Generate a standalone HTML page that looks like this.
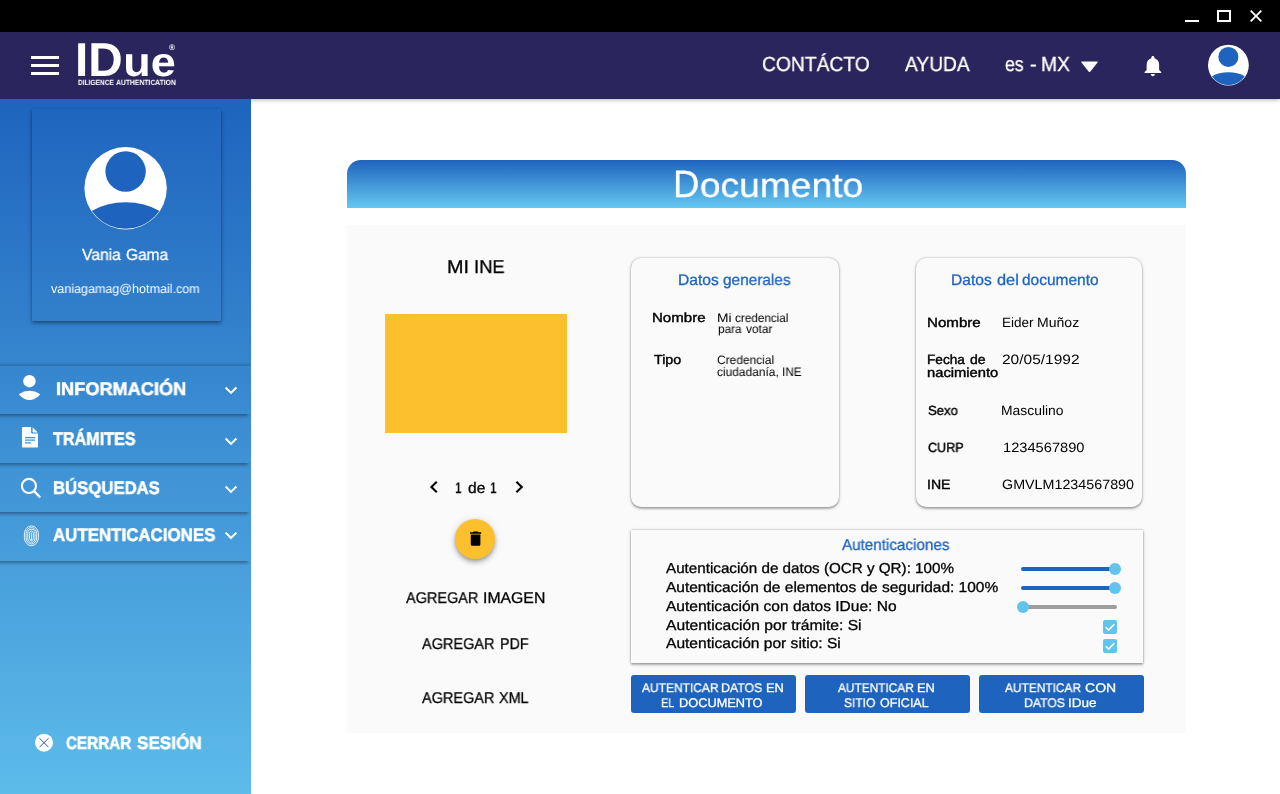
<!DOCTYPE html>
<html lang="es-MX"><head><meta charset="utf-8"><title>IDue - Documento</title>
<style>
*{box-sizing:border-box;margin:0;padding:0}
html,body{width:1280px;height:794px;overflow:hidden;background:#fff}
body{position:relative;font-family:"Liberation Sans",sans-serif;-webkit-font-smoothing:antialiased}
.abs,.t,svg{position:absolute}
h1,nav,aside,main,section{font:inherit}
.t{will-change:transform;text-rendering:geometricPrecision;transform-origin:0 50%;display:block;font-weight:400;white-space:nowrap}
.md{-webkit-text-stroke:.3px currentColor}
.sb{-webkit-text-stroke:.42px currentColor}
.xb{-webkit-text-stroke:.55px currentColor}
#titlebar{left:0;top:0;width:1280px;height:32px;background:#000}
#topbar{left:0;top:32px;width:1280px;height:67px;background:#2a255c;box-shadow:0 1px 4px rgba(0,0,0,.3)}
#sidebar{left:0;top:99px;width:251px;height:695px;overflow:hidden;background:linear-gradient(180deg,#1e64be 0%,#5dbcea 100%)}
#profile{left:32px;top:109px;width:189px;height:212px;box-shadow:0 2px 4px rgba(0,0,0,.42),0 0 2px rgba(0,0,0,.12)}
.item{left:0;width:250px;height:48px}
.sh{left:0;width:250px;height:5px;background:linear-gradient(180deg,rgba(0,0,0,.30) 0,rgba(0,0,0,.27) 20%,rgba(0,0,0,.17) 40%,rgba(0,0,0,.08) 65%,rgba(0,0,0,0) 100%);-webkit-mask-image:linear-gradient(90deg,#000 0,#000 246px,transparent 250px);mask-image:linear-gradient(90deg,#000 0,#000 246px,transparent 250px)}
.sht{left:0;top:361px;width:250px;height:5px;background:linear-gradient(0deg,rgba(0,0,0,.17) 0,rgba(0,0,0,.13) 20%,rgba(0,0,0,.08) 45%,rgba(0,0,0,.03) 70%,rgba(0,0,0,0) 100%)}
#dochead{left:347px;top:160px;width:839px;height:48px;border-radius:14px 14px 0 0;background:linear-gradient(180deg,#1e63bd 0%,#65c8f1 100%)}
#panel{left:347px;top:225px;width:839px;height:508px;background:#fafafa}
#photo{left:385px;top:314px;width:182px;height:119px;background:#fcbf2d}
#fab{left:455px;top:519px;width:40px;height:40px;border-radius:50%;background:#fcbf2d;box-shadow:0 2px 4px -1px rgba(0,0,0,.28),0 4px 5px 0 rgba(0,0,0,.16),0 1px 10px 0 rgba(0,0,0,.12)}
.card{background:#fafafa;border-radius:10px;box-shadow:0 2px 2px rgba(0,0,0,.24),0 0 2px rgba(0,0,0,.3),0 1px 5px rgba(0,0,0,.1)}
#card1{left:631px;top:258px;width:208px;height:249px}
#card2{left:916px;top:258px;width:226px;height:249px}
#auth{left:631px;top:530px;width:512px;height:133px;background:#fafafa;box-shadow:0 2px 2px rgba(0,0,0,.24),0 0 2px rgba(0,0,0,.3),0 1px 5px rgba(0,0,0,.1)}
.btn{top:675px;width:165px;height:38px;border-radius:3px;background:#1e63bd}
.track{height:4px;border-radius:2px}
.thumb{width:12px;height:12px;border-radius:50%;background:#62c4ee}
.chk{width:14px;height:14px;border-radius:2px;background:#62c4ee}
</style></head>
<body>
<div id="titlebar" class="abs">
<svg width="1280" height="32" viewBox="0 0 1280 32" style="left:0;top:0">
<rect x="1185" y="20" width="14" height="2" fill="#fff"/>
<rect x="1218" y="11" width="12" height="10" fill="none" stroke="#fff" stroke-width="2"/>
<path d="M1250.700 10.700L1261.300 21.300M1261.300 10.700L1250.700 21.300" stroke="#fff" stroke-width="1.900" fill="none"/>
</svg>
</div>
<header id="topbar" class="abs"></header>
<svg width="1280" height="67" viewBox="0 32 1280 67" style="left:0;top:32px">
<rect x="31" y="56" width="28" height="3" fill="#fff"/><rect x="31" y="64" width="28" height="3" fill="#fff"/><rect x="31" y="72" width="28" height="3" fill="#fff"/>
<path d="M1081.800 61.500h15.400q1 0 .4.900l-7.400 9.300q-.7.800-1.400 0l-7.400-9.300q-.6-.9.400-.9z" fill="#fff"/>
<g transform="translate(1140.400 53.300) scale(1.040)"><path fill="#fff" d="M12 22c1.100 0 2-.900 2-2h-4c0 1.100.890 2 2 2zm6-6v-5c0-3.070-1.640-5.640-4.500-6.320V4c0-.830-.670-1.500-1.500-1.500s-1.500.670-1.500 1.500v.680C7.630 5.360 6 7.920 6 11v5l-2 2v1h16v-1l-2-2z"/></g>
<circle cx="1228.4" cy="65.2" r="20.4" fill="#fff"/><circle cx="1228.4" cy="56.94" r="10.00" fill="#1e63bd"/><clipPath id="cl1228"><circle cx="1228.4" cy="65.2" r="19.80"/></clipPath><ellipse cx="1228.4" cy="86.62" rx="23.46" ry="14.48" fill="#1e63bd" clip-path="url(#cl1228)"/>
</svg>
<div><span class="t" style="left:75.02px;top:32.03px;font-size:47.5px;line-height:57px;transform:scaleX(1.0050);color:#fff;font-weight:700">ID<span style="display:inline-block;font-size:41px;line-height:49px;margin-left:0.93px;transform:scaleX(1.0902);transform-origin:0 50%">ue</span></span>
<span class="t" style="left:169.07px;top:43.16px;font-size:8.2px;line-height:10px;transform:scaleX(0.9841);color:#fff;font-weight:700">®</span></div><span class="t" style="left:77.59px;top:77.87px;font-size:7.6px;line-height:9px;transform:scaleX(0.8672);color:#fff;font-weight:700">DILIGENCE</span> <span class="t" style="left:115.59px;top:77.87px;font-size:7.6px;line-height:9px;transform:scaleX(0.8935);color:#fff;font-weight:700">AUTHENTICATION</span>
<nav><span class="t md" style="left:761.80px;top:52.93px;font-size:20.38px;line-height:24px;transform:scaleX(0.9461);color:#fff">CONTÁCTO</span>
<span class="t md" style="left:905.20px;top:52.93px;font-size:20.38px;line-height:24px;transform:scaleX(0.9433);color:#fff">AYUDA</span>
<span class="t md" style="left:1005.15px;top:52.93px;font-size:20.38px;line-height:24px;transform:scaleX(0.8691);color:#fff">es</span> <span class="t md" style="left:1030.18px;top:52.93px;font-size:20.38px;line-height:24px;transform:scaleX(0.9790);color:#fff">-</span> <span class="t md" style="left:1041.49px;top:52.93px;font-size:20.38px;line-height:24px;transform:scaleX(0.9458);color:#fff">MX</span></nav>
<aside>
<div id="sidebar" class="abs"></div>
<div id="profile" class="abs"></div>
<div class="sht abs"></div>
<div class="item abs" style="top:366px"></div><div class="sh abs" style="top:414px"></div>
<div class="item abs" style="top:415px"></div><div class="sh abs" style="top:463px"></div>
<div class="item abs" style="top:464px"></div><div class="sh abs" style="top:512px"></div>
<div class="item abs" style="top:513px"></div><div class="sh abs" style="top:561px"></div>
<svg width="251" height="695" viewBox="0 99 251 695" style="left:0;top:99px">
<circle cx="125.6" cy="188.2" r="41.2" fill="#fff"/><circle cx="125.6" cy="171.51" r="20.19" fill="#1e63bd"/><clipPath id="cl125"><circle cx="125.6" cy="188.2" r="40.60"/></clipPath><ellipse cx="125.6" cy="231.46" rx="47.38" ry="29.25" fill="#1e63bd" clip-path="url(#cl125)"/>
<g fill="#fff">
<circle cx="29.400" cy="381.200" r="6.200"/>
<path d="M18.700 394.200Q29.400 387.400 40.400 394.200Q29.400 406 18.700 394.200z"/>
<path d="M23 427h8.100v5.200q0 1.400 1.400 1.400h5.500v12.800q0 1-1 1h-14q-1 0-1-1v-18.400q0-1 1-1zM32.600 427.300l5.100 5.100h-4.400q-.7 0-.7-.7z"/>
</g>
<g stroke="#3f93d8" stroke-width="1.200" fill="none"><path d="M25 437.600h10.200M25 440.200h10.200M25 442.800h6.200"/></g>
<g stroke="#fff" fill="none" stroke-linecap="round"><circle cx="28.950" cy="485.900" r="7.050" stroke-width="2.100"/><path d="M34.300 491.400L39.600 496.700" stroke-width="2.300"/></g>
<g stroke="#fff" fill="none" stroke-width=".95" opacity=".92">
<rect x="24.40" y="525.90" width="14.0" height="19.8" rx="7.00" ry="8.05"/><rect x="26.10" y="527.60" width="10.6" height="16.4" rx="5.30" ry="6.09"/><rect x="27.80" y="529.30" width="7.2" height="13.0" rx="3.60" ry="4.14"/><rect x="29.50" y="531.00" width="3.8" height="9.6" rx="1.90" ry="2.18"/><path d="M31.4 532.5999999999999v7.500"/>
</g>
<g fill="#fff">
<path transform="translate(218.80 378.01) scale(1.017)" d="M16.590 8.590L12 13.170 7.410 8.590 6 10l6 6 6-6z"/>
<path transform="translate(218.80 429.06) scale(1.017)" d="M16.590 8.590L12 13.170 7.410 8.590 6 10l6 6 6-6z"/>
<path transform="translate(218.80 477.06) scale(1.017)" d="M16.590 8.590L12 13.170 7.410 8.590 6 10l6 6 6-6z"/>
<path transform="translate(218.80 523.16) scale(1.017)" d="M16.590 8.590L12 13.170 7.410 8.590 6 10l6 6 6-6z"/>
</g>
<circle cx="44" cy="742.700" r="9" fill="#fff"/>
<path d="M39.600 738.300L48.400 747.100M48.400 738.300L39.600 747.100" stroke="#2a52b4" stroke-width="1" fill="none"/>
</svg>
<span class="t md" style="left:81.90px;top:245.95px;font-size:16.02px;line-height:19px;transform:scaleX(0.9778);color:#fff">Vania</span> <span class="t md" style="left:125.57px;top:245.95px;font-size:16.02px;line-height:19px;transform:scaleX(0.9657);color:#fff">Gama</span>
<span class="t" style="left:51.00px;top:282.10px;font-size:12.7px;line-height:15px;transform:scaleX(0.9887);color:#fff">vaniagamag@hotmail.com</span>
<span class="t xb" style="left:55.76px;top:377.67px;font-size:18.27px;line-height:22px;transform:scaleX(0.9947);color:#fff;font-weight:700">INFORMACIÓN</span>
<span class="t xb" style="left:53.20px;top:427.61px;font-size:18.42px;line-height:22px;transform:scaleX(0.8787);color:#fff;font-weight:700">TRÁMITES</span>
<span class="t xb" style="left:53.05px;top:476.77px;font-size:17.98px;line-height:22px;transform:scaleX(0.9304);color:#fff;font-weight:700">BÚSQUEDAS</span>
<span class="t xb" style="left:52.84px;top:523.71px;font-size:18.13px;line-height:22px;transform:scaleX(0.9326);color:#fff;font-weight:700">AUTENTICACIONES</span>
<span class="t xb" style="left:65.82px;top:733.32px;font-size:17.83px;line-height:21px;transform:scaleX(0.8544);color:#fff;font-weight:700">CERRAR</span> <span class="t xb" style="left:136.73px;top:733.32px;font-size:17.83px;line-height:21px;transform:scaleX(0.9587);color:#fff;font-weight:700">SESIÓN</span>
</aside>
<main>
<div id="dochead" class="abs"></div>
<h1><span class="t md" style="left:673.05px;top:161.83px;font-size:38.0px;line-height:46px;transform:scaleX(0.9587);color:#fff">D<span style="display:inline-block;font-size:34.2px;line-height:41px;margin-left:0.81px;transform:scaleX(1.1346);transform-origin:0 50%">ocumento</span></span></h1>
<div id="panel" class="abs"></div>
<span class="t md" style="left:446.65px;top:255.54px;font-size:18.63px;line-height:22px;transform:scaleX(1.0651);color:#000">MI</span> <span class="t md" style="left:473.56px;top:255.54px;font-size:18.63px;line-height:22px;transform:scaleX(0.9890);color:#000">INE</span>
<div id="photo" class="abs"></div>
<svg width="110" height="30" viewBox="420 472 110 30" style="left:420px;top:472px"><g stroke="#000" stroke-width="2.100" fill="none"><path d="M436.800 481.700L431.400 487L436.800 492.300"/><path d="M516.400 481.700L521.800 487L516.400 492.300"/></g></svg>
<span class="t md" style="left:454.74px;top:479.74px;font-size:15.18px;line-height:18px;transform:scaleX(0.8000);color:#000">1</span> <span class="t md" style="left:467.61px;top:479.74px;font-size:15.18px;line-height:18px;transform:scaleX(1.0256);color:#000">de</span> <span class="t md" style="left:489.94px;top:479.74px;font-size:15.18px;line-height:18px;transform:scaleX(0.8000);color:#000">1</span>
<div id="fab" class="abs"></div>
<svg width="20" height="20" viewBox="0 0 24 24" style="left:465.700px;top:529.400px;width:19.200px;height:19.200px"><path fill="#000" d="M6 19c0 1.100.900 2 2 2h8c1.100 0 2-.900 2-2V7H6v12zM19 4h-3.500l-1-1h-5l-1 1H5v2h14V4z"/></svg>
<span class="t md" style="left:405.60px;top:589.10px;font-size:15.58px;line-height:19px;transform:scaleX(0.9279);color:#000">AGREGAR</span> <span class="t md" style="left:482.57px;top:589.10px;font-size:15.58px;line-height:19px;transform:scaleX(1.0140);color:#000">IMAGEN</span>
<span class="t md" style="left:422.20px;top:635.10px;font-size:15.58px;line-height:19px;transform:scaleX(0.9292);color:#000">AGREGAR</span> <span class="t md" style="left:499.59px;top:635.10px;font-size:15.58px;line-height:19px;transform:scaleX(0.9139);color:#000">PDF</span>
<span class="t md" style="left:421.70px;top:689.10px;font-size:15.58px;line-height:19px;transform:scaleX(0.9279);color:#000">AGREGAR</span> <span class="t md" style="left:498.88px;top:689.10px;font-size:15.58px;line-height:19px;transform:scaleX(0.9235);color:#000">XML</span>
<section id="card1" class="card abs"></section>
<span class="t md" style="left:677.68px;top:271.14px;font-size:15.46px;line-height:19px;transform:scaleX(1.0130);color:#1e63bd">Datos</span> <span class="t md" style="left:722.72px;top:271.14px;font-size:15.46px;line-height:19px;transform:scaleX(0.9950);color:#1e63bd">generales</span>
<span class="t sb" style="left:652.32px;top:310.42px;font-size:13.2px;line-height:16px;transform:scaleX(1.1414);color:#000">Nombre</span>
<span class="t" style="left:717.02px;top:311.27px;font-size:12.2px;line-height:15px;transform:scaleX(1.1335);color:#000">Mi</span> <span class="t" style="left:735.03px;top:311.27px;font-size:12.2px;line-height:15px;transform:scaleX(0.9628);color:#000">credencial</span>
<span class="t" style="left:718.16px;top:322.27px;font-size:12.2px;line-height:15px;transform:scaleX(0.9691);color:#000">para</span> <span class="t" style="left:745.90px;top:322.27px;font-size:12.2px;line-height:15px;transform:scaleX(0.9755);color:#000">votar</span>
<span class="t sb" style="left:653.88px;top:352.42px;font-size:13.2px;line-height:16px;transform:scaleX(1.0799);color:#000">Tipo</span>
<span class="t" style="left:716.94px;top:353.27px;font-size:12.2px;line-height:15px;transform:scaleX(0.9817);color:#000">Credencial</span>
<span class="t" style="left:717.13px;top:365.27px;font-size:12.2px;line-height:15px;transform:scaleX(0.9791);color:#000">ciudadanía,</span> <span class="t" style="left:782.19px;top:365.27px;font-size:12.2px;line-height:15px;transform:scaleX(0.9591);color:#000">INE</span>
<section id="card2" class="card abs"></section>
<span class="t md" style="left:951.18px;top:271.14px;font-size:15.46px;line-height:19px;transform:scaleX(1.0079);color:#1e63bd">Datos</span> <span class="t md" style="left:996.59px;top:271.14px;font-size:15.46px;line-height:19px;transform:scaleX(1.0612);color:#1e63bd">del</span> <span class="t md" style="left:1022.02px;top:271.14px;font-size:15.46px;line-height:19px;transform:scaleX(1.0016);color:#1e63bd">documento</span>
<span class="t sb" style="left:927.22px;top:315.39px;font-size:13.3px;line-height:16px;transform:scaleX(1.1372);color:#000">Nombre</span>
<span class="t" style="left:1001.55px;top:315.32px;font-size:13.5px;line-height:16px;transform:scaleX(1.0002);color:#000">Eider</span> <span class="t" style="left:1036.60px;top:315.32px;font-size:13.5px;line-height:16px;transform:scaleX(1.0404);color:#000">Muñoz</span>
<span class="t sb" style="left:927.33px;top:352.39px;font-size:13.3px;line-height:16px;transform:scaleX(1.0275);color:#000">Fecha</span> <span class="t sb" style="left:970.26px;top:352.39px;font-size:13.3px;line-height:16px;transform:scaleX(1.0550);color:#000">de</span>
<span class="t sb" style="left:927.48px;top:365.39px;font-size:13.3px;line-height:16px;transform:scaleX(1.1073);color:#000">nacimiento</span>
<span class="t" style="left:1001.87px;top:352.32px;font-size:13.5px;line-height:16px;transform:scaleX(1.1478);color:#000">20/05/1992</span>
<span class="t sb" style="left:927.99px;top:403.39px;font-size:13.3px;line-height:16px;transform:scaleX(0.9843);color:#000">Sexo</span>
<span class="t" style="left:1001.11px;top:403.32px;font-size:13.5px;line-height:16px;transform:scaleX(1.0292);color:#000">Masculino</span>
<span class="t sb" style="left:927.81px;top:440.39px;font-size:13.3px;line-height:16px;transform:scaleX(0.9479);color:#000">CURP</span>
<span class="t" style="left:1002.68px;top:440.32px;font-size:13.5px;line-height:16px;transform:scaleX(1.0852);color:#000">1234567890</span>
<span class="t sb" style="left:927.30px;top:477.39px;font-size:13.3px;line-height:16px;transform:scaleX(1.0596);color:#000">INE</span>
<span class="t" style="left:1001.93px;top:477.32px;font-size:13.5px;line-height:16px;transform:scaleX(1.0597);color:#000">GMVLM1234567890</span>
<section id="auth" class="abs"></section>
<span class="t md" style="left:842.00px;top:536.04px;font-size:15.74px;line-height:19px;transform:scaleX(0.9672);color:#1e63bd">Autenticaciones</span>
<span class="t md" style="left:666.30px;top:561.48px;font-size:14.48px;line-height:17px;transform:scaleX(1.0500);color:#000">Autenticación de datos (OCR y QR): 100%</span>
<span class="t md" style="left:666.30px;top:580.48px;font-size:14.48px;line-height:17px;transform:scaleX(1.0700);color:#000">Autenticación de elementos de seguridad: 100%</span>
<span class="t md" style="left:666.30px;top:599.48px;font-size:14.48px;line-height:17px;transform:scaleX(1.0736);color:#000">Autenticación con datos IDue: No</span>
<span class="t md" style="left:666.30px;top:618.48px;font-size:14.48px;line-height:17px;transform:scaleX(1.0809);color:#000">Autenticación por trámite: Si</span>
<span class="t md" style="left:666.30px;top:636.48px;font-size:14.48px;line-height:17px;transform:scaleX(1.0759);color:#000">Autenticación por sitio: Si</span>
<div class="track abs" style="left:1021px;top:567px;width:94px;background:#1e63bd"></div><div class="thumb abs" style="left:1109px;top:563px"></div>
<div class="track abs" style="left:1021px;top:586px;width:94px;background:#1e63bd"></div><div class="thumb abs" style="left:1109px;top:582px"></div>
<div class="track abs" style="left:1023px;top:605px;width:94px;background:#9e9e9e"></div><div class="thumb abs" style="left:1017px;top:601px"></div>
<div class="chk abs" style="left:1103px;top:620px"></div>
<div class="chk abs" style="left:1103px;top:639px"></div>
<svg width="14" height="33" viewBox="1103 620 14 33" style="left:1103px;top:620px"><g stroke="#fff" stroke-width="1.500" fill="none"><path d="M1105.800 627.300L1108.600 630.100L1114.300 624.300"/><path d="M1105.800 646.300L1108.600 649.100L1114.300 643.300"/></g></svg>
<div class="btn abs" style="left:631px"></div><div class="btn abs" style="left:805px"></div><div class="btn abs" style="left:979px"></div>
<span class="t md" style="left:641.70px;top:681.16px;font-size:12.53px;line-height:15px;transform:scaleX(0.9570);color:#fff">AUTENTICAR</span> <span class="t md" style="left:720.63px;top:681.16px;font-size:12.53px;line-height:15px;transform:scaleX(0.9876);color:#fff">DATOS</span> <span class="t md" style="left:765.70px;top:681.16px;font-size:12.53px;line-height:15px;transform:scaleX(1.0256);color:#fff">EN</span>
<span class="t md" style="left:661.46px;top:696.16px;font-size:12.53px;line-height:15px;transform:scaleX(0.8621);color:#fff">EL</span> <span class="t md" style="left:678.50px;top:696.16px;font-size:12.53px;line-height:15px;transform:scaleX(1.0213);color:#fff">DOCUMENTO</span>
<span class="t md" style="left:838.10px;top:681.16px;font-size:12.53px;line-height:15px;transform:scaleX(0.9470);color:#fff">AUTENTICAR</span> <span class="t md" style="left:917.40px;top:681.16px;font-size:12.53px;line-height:15px;transform:scaleX(1.0256);color:#fff">EN</span>
<span class="t md" style="left:844.02px;top:696.16px;font-size:12.53px;line-height:15px;transform:scaleX(0.9596);color:#fff">SITIO</span> <span class="t md" style="left:879.81px;top:696.16px;font-size:12.53px;line-height:15px;transform:scaleX(0.9971);color:#fff">OFICIAL</span>
<span class="t md" style="left:1005.20px;top:681.16px;font-size:12.53px;line-height:15px;transform:scaleX(0.9507);color:#fff">AUTENTICAR</span> <span class="t md" style="left:1084.84px;top:681.16px;font-size:12.53px;line-height:15px;transform:scaleX(1.1207);color:#fff">CON</span>
<span class="t md" style="left:1023.54px;top:696.16px;font-size:12.53px;line-height:15px;transform:scaleX(0.9802);color:#fff">DATOS</span> <span class="t md" style="left:1068.24px;top:696.16px;font-size:12.53px;line-height:15px;transform:scaleX(1.0808);color:#fff">IDue</span>
</main>
</body></html>
